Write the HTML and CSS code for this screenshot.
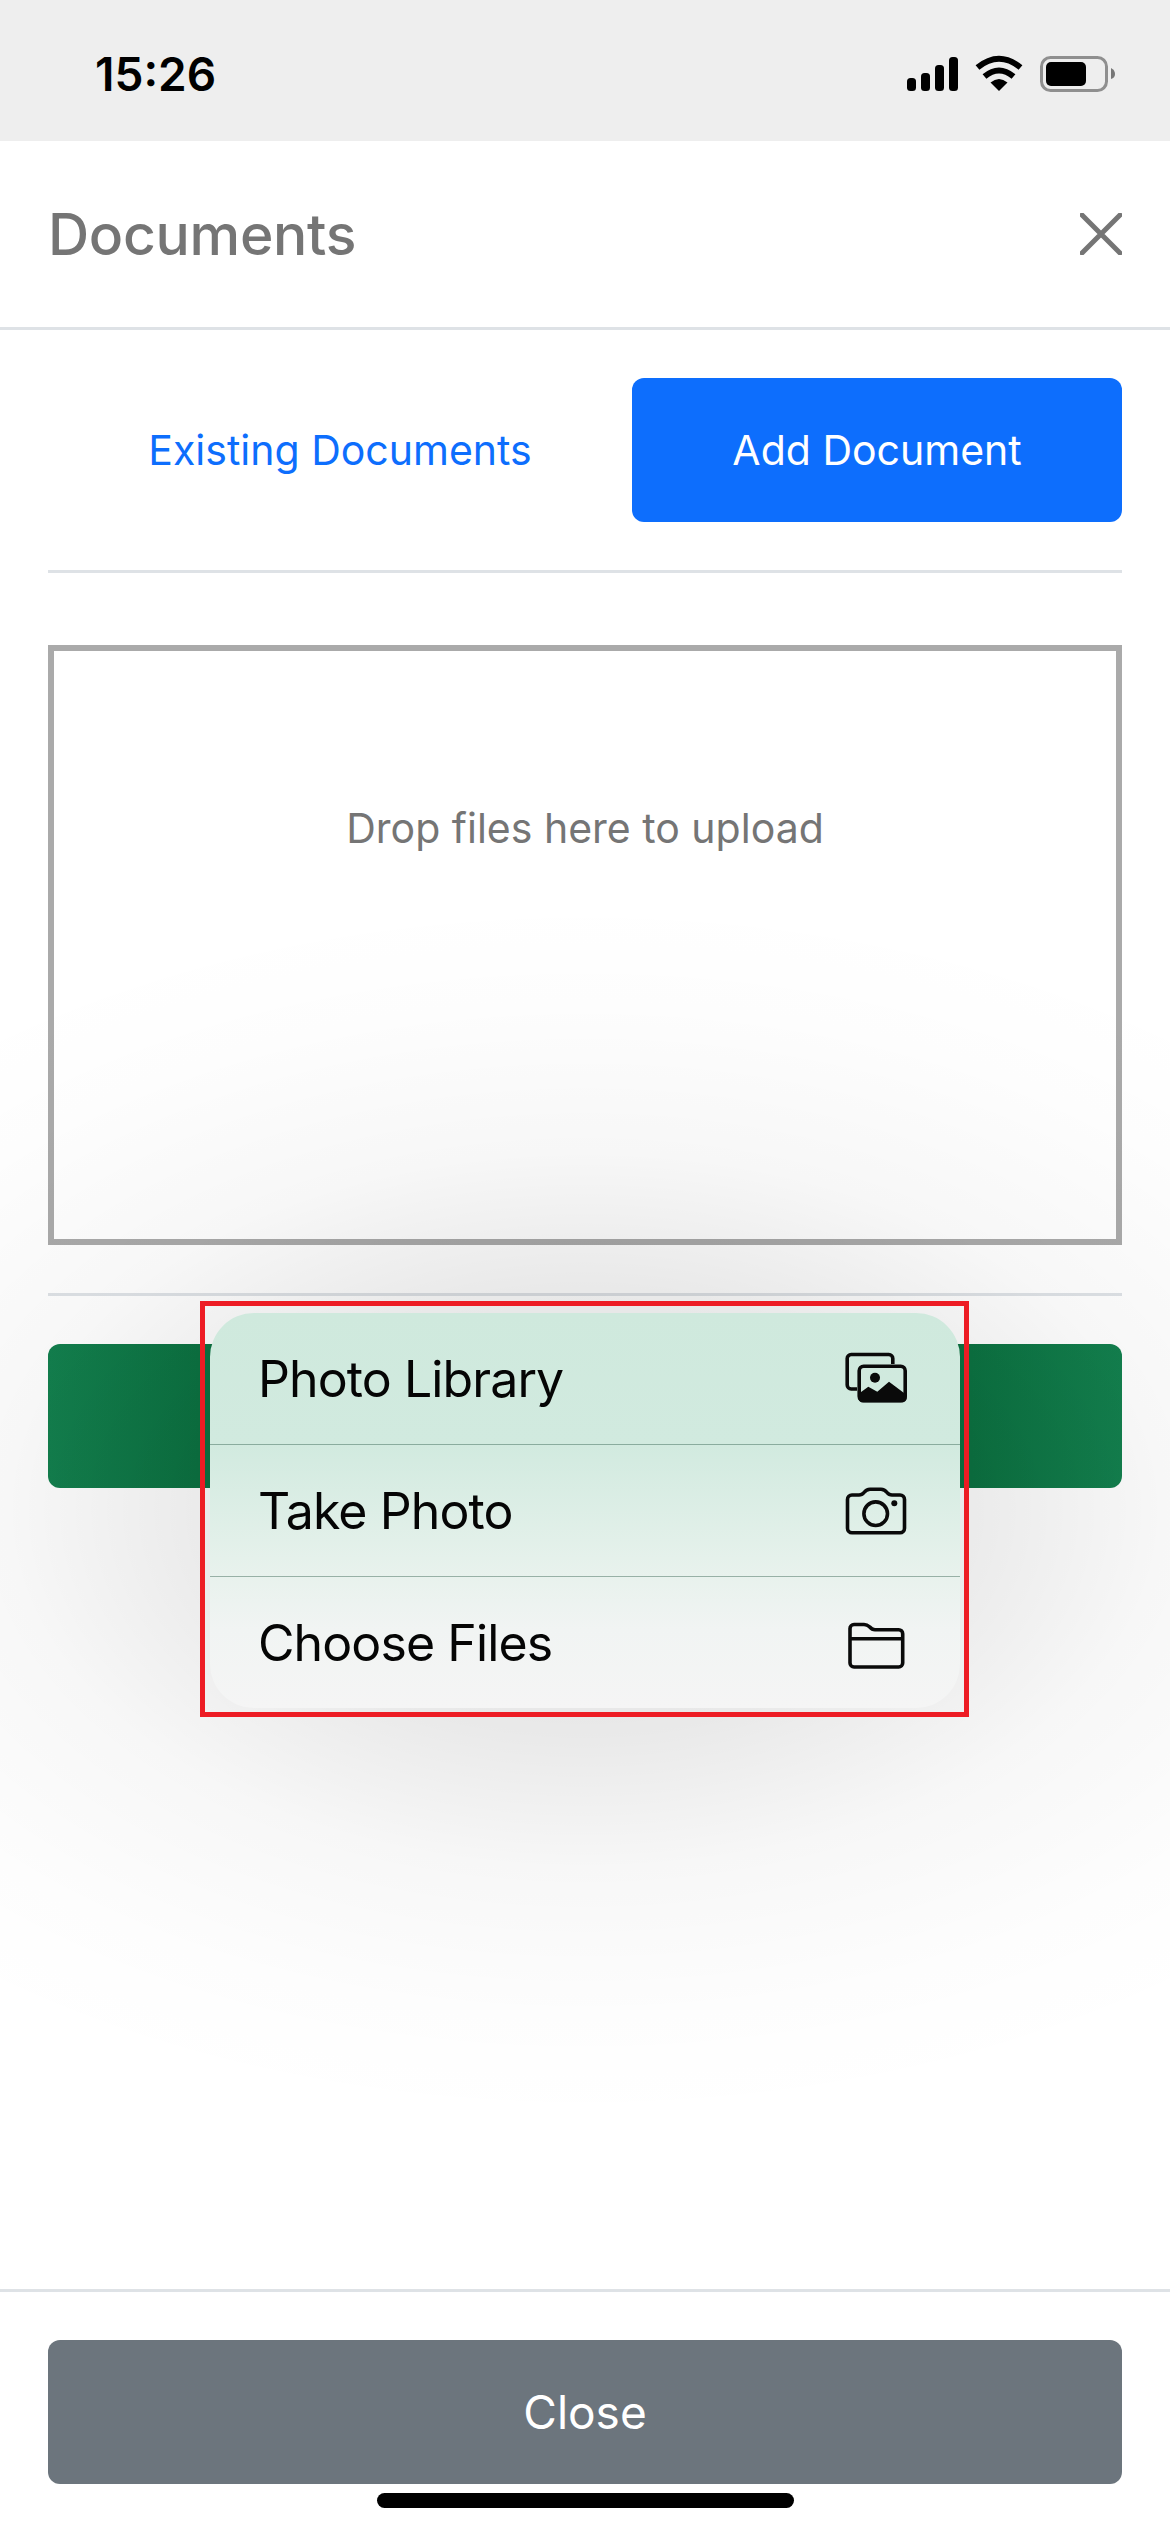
FILE: index.html
```html
<!DOCTYPE html>
<html lang="en">
  <head>
    <meta charset="UTF-8" />
    <title>Documents</title>
    <link rel="stylesheet" href="styles.css">
  </head>
  <body>
    <div id="screen">
      <div id="statusBar">
        <span id="clock">15:26</span>
        <div id="statusIcons">
          <svg class="signal" width="51" height="34" viewBox="0 0 51 34">
            <rect x="0" y="21" width="9" height="13" rx="3.5" />
            <rect x="14" y="16" width="9" height="18" rx="3.5" />
            <rect x="28" y="8" width="9" height="26" rx="3.5" />
            <rect x="42" y="0" width="9" height="34" rx="3.5" />
          </svg>
          <svg class="wifi" width="48" height="36" viewBox="0 0 48 36">
            <path d="M24 36 L15.5 27.5 Q24 20.5 32.5 27.5 Z" />
            <path d="M9.5 21.5 Q24 9.5 38.5 21.5" fill="none" stroke="#000" stroke-width="6" />
            <path d="M2.5 12.5 Q24 -5 45.5 12.5" fill="none" stroke="#000" stroke-width="6" />
          </svg>
          <svg class="battery" width="75" height="36" viewBox="0 0 75 36">
            <rect x="1.5" y="1.5" width="65" height="33" rx="9" fill="none" stroke="#8f8f8f" stroke-width="3" />
            <rect x="6" y="6" width="40" height="24" rx="5" />
            <path d="M71 12 Q75 14 75 18 Q75 22 71 23 Z" fill="#777" />
          </svg>
        </div>
      </div>

      <div id="modalHeader">
        <h1>Documents</h1>
        <svg class="closeIcon" width="42" height="42" viewBox="0 0 42 42">
          <path d="M2 2 L40 40 M40 2 L2 40" />
        </svg>
      </div>

      <div id="modalBody">
        <div id="tabs">
          <a class="tab">Existing Documents</a>
          <a class="tab active">Add Document</a>
        </div>
        <hr class="rule" />
        <div id="dropzone">Drop files here to upload</div>
        <hr class="rule" />
        <div id="uploadBtn"></div>
      </div>

      <div id="modalFooter">
        <div id="closeBtn">Close</div>
      </div>

      <div id="scrim"></div>
      <div id="menu">
        <div class="menuItem">
          <span>Photo Library</span>
          <svg class="menuIcon" width="72" height="60" viewBox="0 0 72 60">
            <path d="M52.8 15 V9.5 a4 4 0 0 0 -4 -4 H11.2 a4 4 0 0 0 -4 4 V36 a4 4 0 0 0 4 4 H17" />
            <rect x="19.2" y="17.2" width="46" height="34.6" rx="4.5" />
            <circle class="solid" cx="35" cy="28.7" r="5" />
            <path class="solid" d="M18.3 45 L28.3 37.7 L37.3 42.7 L49 32.7 L66.7 46 V49 a4.3 4.3 0 0 1 -4.3 4.3 H22.6 a4.3 4.3 0 0 1 -4.3 -4.3 Z" />
          </svg>
        </div>
        <div class="menuItem">
          <span>Take Photo</span>
          <svg class="menuIcon" width="72" height="60" viewBox="0 0 72 60">
            <path d="M12 14 H19 Q22 14 24 11.5 Q26.500 8.300 30 8.300 H41 Q44.500 8.300 47 11.500 Q49 14 52 14 H60 a4.500 4.500 0 0 1 4.500 4.500 V47.200 a4.500 4.500 0 0 1 -4.500 4.500 H12 a4.500 4.500 0 0 1 -4.500 -4.500 V18.500 a4.500 4.500 0 0 1 4.500 -4.500 Z" />
            <circle cx="35.700" cy="32.700" r="11.800" />
            <circle class="solid" cx="54.300" cy="22.300" r="3" />
          </svg>
        </div>
        <div class="menuItem">
          <span>Choose Files</span>
          <svg class="menuIcon" width="72" height="60" viewBox="0 0 72 60">
            <path d="M14 11.500 H24 Q27 11.500 29.500 13.800 Q32 16.700 35 16.700 H58.700 a4 4 0 0 1 4 4 V50 a4 4 0 0 1 -4 4 H14 a4 4 0 0 1 -4 -4 V15.500 a4 4 0 0 1 4 -4 Z" />
            <path d="M10 25.700 H62.700" />
          </svg>
        </div>
      </div>
      <div id="highlight"></div>
      <div id="homeBar"></div>
    </div>
  </body>
</html>
```

FILE: styles.css
```css
* {
  box-sizing: border-box;
}
body {
  margin: 0;
  background-color: #fff;
  font-family: Inter, "Liberation Sans", sans-serif;
}
#screen {
  position: relative;
  display: flex;
  flex-direction: column;
  width: 1170px;
  height: 2532px;
  overflow: hidden;
}
#statusBar {
  display: flex;
  justify-content: space-between;
  align-items: flex-start;
  height: 141px;
  padding: 0 55px 0 95px;
  background-color: #eee;
}
#clock {
  margin-top: 46px;
  font-size: 46px;
  line-height: 56px;
  font-weight: 600;
  color: #000;
}
#statusIcons {
  display: flex;
  align-items: flex-start;
  gap: 17px;
  padding-top: 56px;
}
.signal {
  margin-top: 1px;
}
.wifi {
  margin-top: -1px;
}
#modalHeader {
  display: flex;
  justify-content: space-between;
  align-items: center;
  height: 189px;
  padding: 0 48px;
  border-bottom: 3px solid #dee2e6;
}
h1 {
  margin: 0;
  font-size: 57px;
  font-weight: 500;
  letter-spacing: -0.3px;
  color: #757575;
}
.closeIcon path {
  fill: none;
  stroke: #757575;
  stroke-width: 5;
  stroke-linecap: round;
}
#modalBody {
  flex: 1;
  padding: 48px 48px 0;
}
#tabs {
  display: flex;
}
.tab {
  flex: 1 1 auto;
  height: 144px;
  line-height: 144px;
  text-align: center;
  font-size: 41px;
  color: #0d6efd;
  border-radius: 12px;
}
.tab.active {
  background-color: #0d6efd;
  color: #fff;
}
.rule {
  height: 3px;
  margin: 48px 0;
  border: none;
  background-color: #dee2e6;
}
#dropzone {
  height: 600px;
  margin-top: 72px;
  padding-top: 152px;
  border: 6px solid #aaa;
  text-align: center;
  font-size: 41px;
  line-height: 50px;
  color: #757575;
}
#uploadBtn {
  height: 144px;
  background: linear-gradient(90deg, #13804e 0%, #0c7342 14%, #0c7342 86%, #13804e 100%);
  border-radius: 12px;
}
#modalFooter {
  height: 243px;
  padding: 48px 48px 0;
  border-top: 3px solid #dee2e6;
}
#closeBtn {
  height: 144px;
  line-height: 144px;
  text-align: center;
  font-size: 46px;
  color: #fff;
  background-color: #6c757d;
  border-radius: 12px;
}

/* soft shadow the native picker throws on the page */
#scrim {
  position: absolute;
  inset: 141px 0 0;
  background: radial-gradient(ellipse 1000px 620px at 585px 1369px,
    rgba(0, 0, 0, 0.1) 0%,
    rgba(0, 0, 0, 0.095) 30%,
    rgba(0, 0, 0, 0.086) 36%,
    rgba(0, 0, 0, 0.03) 58%,
    rgba(0, 0, 0, 0.008) 82%,
    rgba(0, 0, 0, 0) 100%);
  pointer-events: none;
}
#menu {
  position: absolute;
  left: 210px;
  top: 1313px;
  width: 750px;
  height: 395px;
  border-radius: 44px;
  overflow: hidden;
  background: linear-gradient(#cfe9dd 0%, #d1eadf 33%, #e5f1eb 62%, #f1f4f3 80%, #f5f5f5 100%);
}
.menuItem {
  display: flex;
  justify-content: space-between;
  align-items: center;
  height: 132px;
  padding: 0 48px;
  border-bottom: 1px solid rgba(30, 80, 60, 0.4);
  font-size: 50px;
  letter-spacing: -0.9px;
  color: #050505;
}
.menuItem:last-child {
  height: 131px;
  border-bottom: none;
}
.menuIcon * {
  fill: none;
  stroke: #0a0a0a;
  stroke-width: 3.6;
}
.menuIcon .solid {
  fill: #0a0a0a;
  stroke: none;
}
#highlight {
  position: absolute;
  left: 200px;
  top: 1301px;
  width: 769px;
  height: 416px;
  border: 5px solid #ed1c24;
}
#homeBar {
  position: absolute;
  left: 377px;
  top: 2493px;
  width: 417px;
  height: 15px;
  background-color: #000;
  border-radius: 8px;
}
```
